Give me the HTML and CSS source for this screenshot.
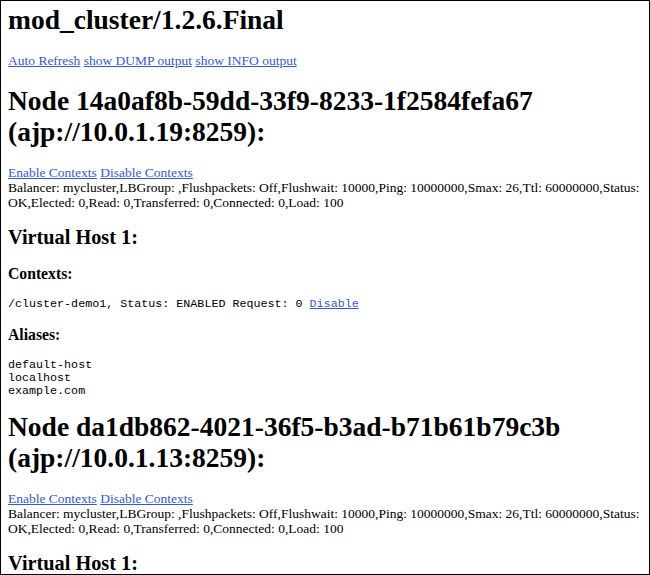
FILE: index.html
```html
<!DOCTYPE html>
<html>
<head>
<meta charset="utf-8">
<title>mod_cluster/1.2.6.Final</title>
<link rel="stylesheet" href="styles.css">
</head>
<body>
<div class="frame">
<h1 class="title">mod_cluster/1.2.6.Final</h1>
<a href="#">Auto Refresh</a> <a href="#">show DUMP output</a> <a href="#">show INFO output</a>
<h1>Node 14a0af8b-59dd-33f9-8233-1f2584fefa67 (ajp://10.0.1.19:8259):</h1>
<a href="#">Enable Contexts</a> <a href="#">Disable Contexts</a><br>
Balancer: mycluster,LBGroup: ,Flushpackets: Off,Flushwait: 10000,Ping: 10000000,Smax: 26,Ttl: 60000000,Status: OK,Elected: 0,Read: 0,Transferred: 0,Connected: 0,Load: 100
<h2>Virtual Host 1:</h2>
<h3>Contexts:</h3>
<pre>/cluster-demo1, Status: ENABLED Request: 0 <a href="#">Disable</a></pre>
<h3>Aliases:</h3>
<pre>default-host
localhost
example.com</pre>
<h1>Node da1db862-4021-36f5-b3ad-b71b61b79c3b (ajp://10.0.1.13:8259):</h1>
<a href="#">Enable Contexts</a> <a href="#">Disable Contexts</a><br>
Balancer: mycluster,LBGroup: ,Flushpackets: Off,Flushwait: 10000,Ping: 10000000,Smax: 26,Ttl: 60000000,Status: OK,Elected: 0,Read: 0,Transferred: 0,Connected: 0,Load: 100
<h2>Virtual Host 1:</h2>
</div>
</body>
</html>
```

FILE: styles.css
```css
html, body {
  margin: 0;
  padding: 0;
  background: #fff;
}
.frame {
  width: 650px;
  height: 575px;
  box-sizing: border-box;
  border: 1px solid #000;
  overflow: hidden;
  padding: 0 8px 0 7px;
  font-family: "Liberation Serif", "Times New Roman", serif;
  font-size: 13.5px;
  line-height: 15px;
  color: #000;
}
.frame a {
  color: #3558d8;
}
.frame h1 {
  font-size: 27.5px;
  line-height: 31px;
  margin: 17px 0 18px;
}
.frame h1.title {
  margin-top: 3px;
  margin-bottom: 18px;
}
.frame pre + h1 {
  margin-top: 13px;
}
.frame h2 {
  font-size: 20.3px;
  line-height: 23px;
  margin: 16px 0;
}
.frame h3 {
  font-size: 15.7px;
  line-height: 18px;
  margin: 15px 0;
}
.frame pre {
  font-family: "Liberation Mono", "Courier New", monospace;
  font-size: 11.7px;
  line-height: 13px;
  margin: 13px 0 12px;
}
```
